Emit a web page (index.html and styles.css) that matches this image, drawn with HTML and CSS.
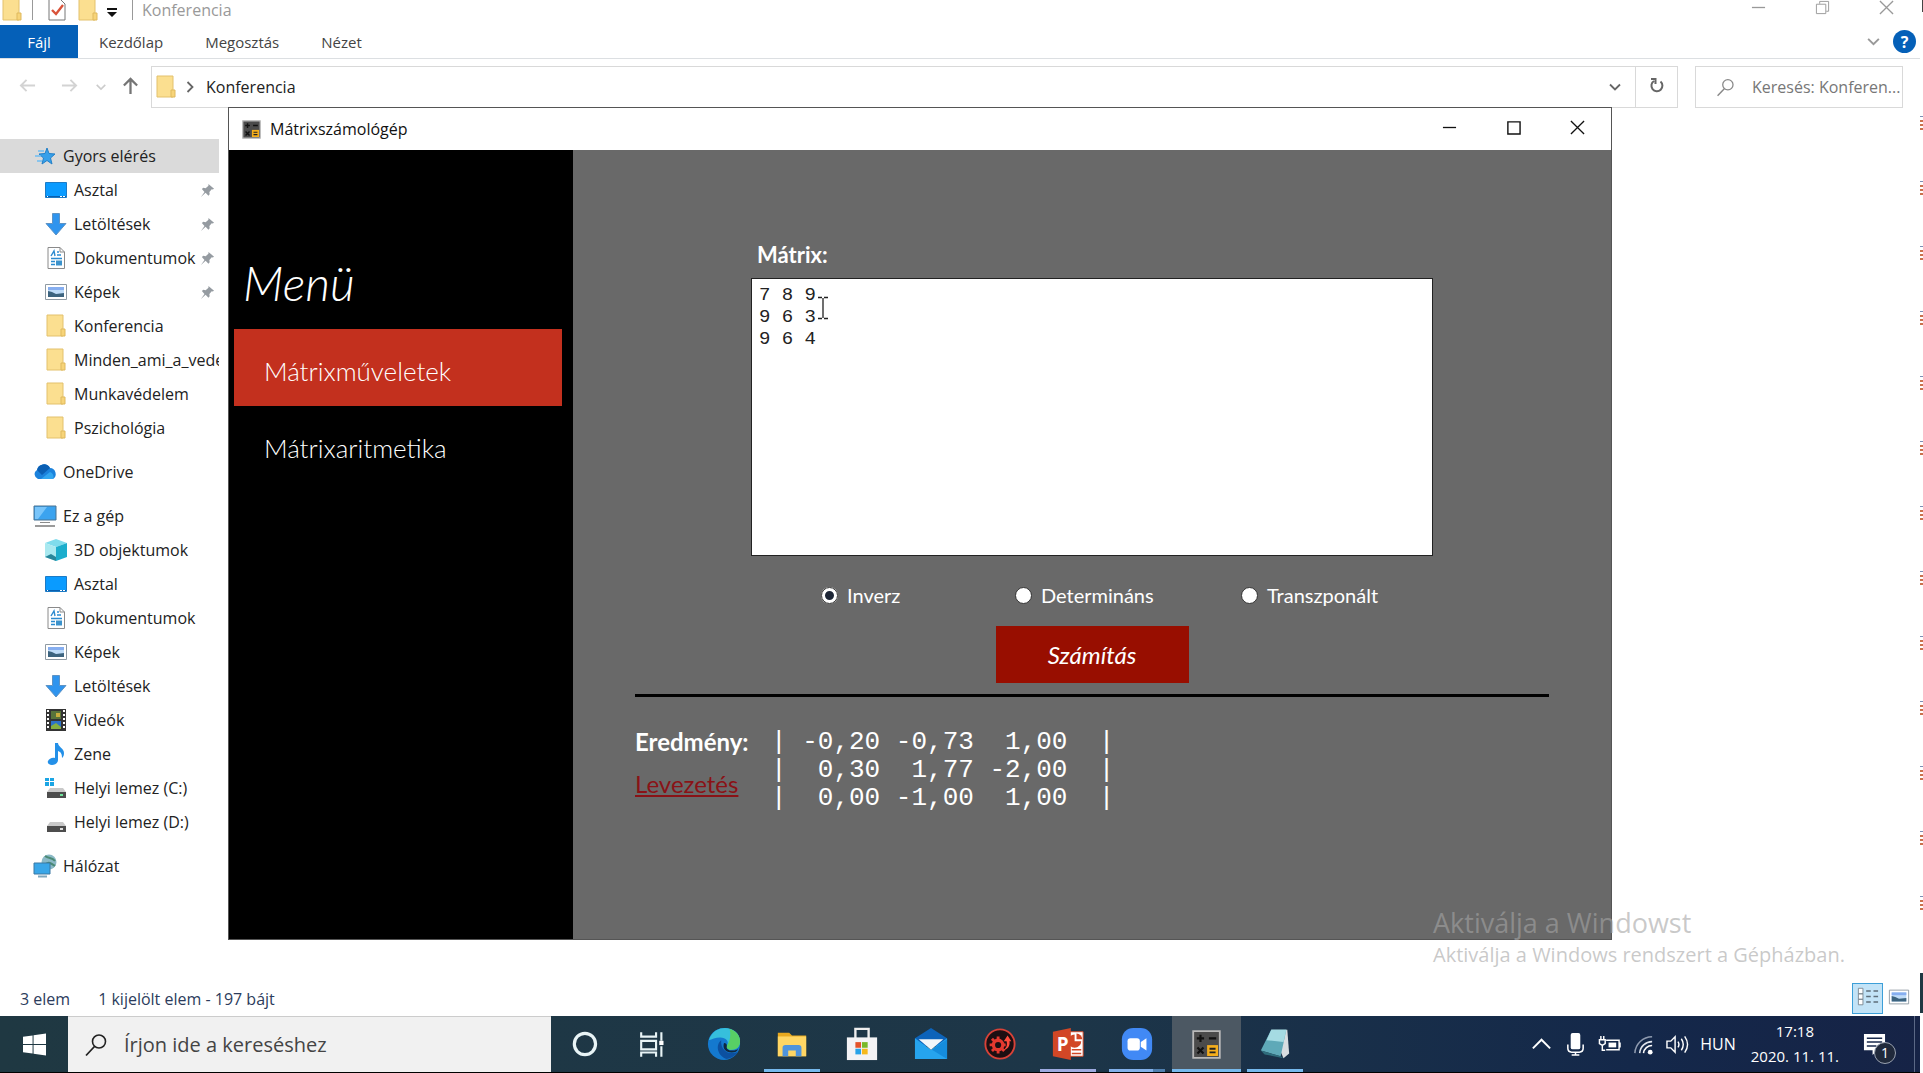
FILE: index.html
```html
<!DOCTYPE html>
<html lang="hu">
<head>
  <meta charset="UTF-8">
  <meta name="viewport" content="width=device-width, initial-scale=1.0">
  <title>Mátrixszámológép</title>
  <link rel="stylesheet" href="styles.css">
</head>
<body>
  <!-- Közös ikonok -->
  <svg class="symbols" aria-hidden="true">
    <symbol id="i-folder" viewBox="0 0 24 24">
      <path d="M3 1h16v21H3z" fill="#fbdf90" stroke="#e3c16c"/>
      <path d="M17 15h4v7h-4z" fill="#f7d479" stroke="#dfb95f"/>
    </symbol>
    <symbol id="i-desktop" viewBox="0 0 24 24">
      <path d="M1.500 4.500h21v15h-21z" fill="#0a9bff" stroke="#1c7bc6"/>
      <path d="M2 18.500h20" stroke="#0a5fae"/>
      <path d="M16 18.500h2M19 18.500h2M3 18.500h1" stroke="#fff"/>
    </symbol>
    <symbol id="i-down" viewBox="0 0 24 24">
      <path d="M8.500 1.500h7v10h6.500L12 23 2 11.500h6.500z" fill="#2f94ee" stroke="#5e93c4"/>
    </symbol>
    <symbol id="i-doc" viewBox="0 0 24 24">
      <path d="M4 1.500h12l4.500 4.500v16.500H4z" fill="#fff" stroke="#8a8a8a"/>
      <path d="M16 1.500V6h4.500" fill="none" stroke="#8a8a8a"/>
      <path d="M7 10l3-5 1 5M13 6h2M13 9h4M7 12.500h11M7 15.500h4M7 18.500h4" fill="none" stroke="#2b8bd0" stroke-width="1.400"/>
      <path d="M12 14.500h6v5h-6z" fill="#3c93cc"/>
    </symbol>
    <symbol id="i-picture" viewBox="0 0 24 24">
      <path d="M1.500 4.500h21v15h-21z" fill="#fff" stroke="#8f9aa3"/>
      <path d="M4 7h16v10H4z" fill="#bfdcf8"/>
      <path d="M4 7h16v3H4z" fill="#86aef0"/>
      <path d="M4 11l4 1 4 2 8-1v4H4z" fill="#3d647f"/>
    </symbol>
    <symbol id="i-pin" viewBox="0 0 16 16">
      <path d="M9 1l6 5-1.500 1-1-.3-2.500 3 .3 2.300-1.300 1.500L6 10.500 1 15l3.800-5.500L2 6.500 3.500 5l2.500.5 3-2.500z" fill="#959ba1"/>
    </symbol>
    <symbol id="i-calc" viewBox="0 0 24 24">
      <path d="M1 1h22v22H1z" fill="#4b4b4b" stroke="#b9b9b9" stroke-width="1.500"/>
      <path d="M4 7h6M7 4v6M14 7h6M4.500 14.500l5 5M9.500 14.500l-5 5" stroke="#111" stroke-width="1.800"/>
      <path d="M12.500 12.500h9v9h-9z" fill="#f5ae1c"/>
      <path d="M14.500 15.500h5M14.500 18.500h5" stroke="#222" stroke-width="1.500"/>
    </symbol>
    <symbol id="i-lens" viewBox="0 0 24 24">
      <circle cx="15" cy="8.500" r="6.500" fill="none" stroke="currentColor" stroke-width="1.600"/>
      <path d="M10.500 13.500L2 22.500" stroke="currentColor" stroke-width="1.800"/>
    </symbol>
    <symbol id="i-chevron" viewBox="0 0 14 14">
      <path d="M2 4.500l5 5 5-5" fill="none" stroke="currentColor" stroke-width="1.800"/>
    </symbol>
    <symbol id="i-close" viewBox="0 0 16 16">
      <path d="M1 1l14 14M15 1L1 15" stroke="currentColor" stroke-width="1.400"/>
    </symbol>
    <symbol id="i-min" viewBox="0 0 16 16">
      <path d="M1 8h14" stroke="currentColor" stroke-width="1.400"/>
    </symbol>
  </svg>

  <div class="screen">
    <div class="desktop">
      <!-- Fájlkezelő -->
      <div class="explorer">
        <header class="titlebar">
          <svg class="ico"><use href="#i-folder"/></svg>
          <span class="sep"></span>
          <svg class="ico check" viewBox="0 0 24 24"><path d="M4 1h11l5 5v16H4z" fill="#fff" stroke="#777"/><path d="M7 12l4 4 7-9" fill="none" stroke="#d9533a" stroke-width="2.400"/></svg>
          <svg class="ico"><use href="#i-folder"/></svg>
          <svg class="ico more" viewBox="0 0 24 24"><path d="M7 10h10v2H7zM7 14h10l-5 5z" fill="#111"/></svg>
          <span class="sep"></span>
          <span class="title">Konferencia</span>
          <div class="win-buttons">
            <button aria-label="Kis méret"><svg><use href="#i-min"/></svg></button>
            <button aria-label="Előző méret"><svg viewBox="0 0 16 16"><path d="M1.500 4.500h10v10h-10zM5 4V1.500h9.500V12H12" fill="none" stroke="currentColor"/></svg></button>
            <button aria-label="Bezárás"><svg><use href="#i-close"/></svg></button>
          </div>
        </header>
        <nav class="tabs">
          <a href="#" class="file">Fájl</a>
          <a href="#">Kezdőlap</a>
          <a href="#">Megosztás</a>
          <a href="#">Nézet</a>
          <svg class="expand"><use href="#i-chevron"/></svg>
          <button class="help" aria-label="Súgó">?</button>
        </nav>
        <div class="address-row">
          <button class="nav" aria-label="Vissza"><svg viewBox="0 0 18 18"><path d="M17 9H2M8 3L2 9l6 6" fill="none" stroke="#d3d3d3" stroke-width="2"/></svg></button>
          <button class="nav" aria-label="Előre"><svg viewBox="0 0 18 18"><path d="M1 9h15M10 3l6 6-6 6" fill="none" stroke="#d3d3d3" stroke-width="2"/></svg></button>
          <svg class="recent"><use href="#i-chevron"/></svg>
          <button class="nav up" aria-label="Fel"><svg viewBox="0 0 18 18"><path d="M9 18V2M2 9l7-7 7 7" fill="none" stroke="#757575" stroke-width="2.400"/></svg></button>
          <div class="address">
            <svg class="ico"><use href="#i-folder"/></svg>
            <svg class="crumb"><use href="#i-chevron"/></svg>
            <span>Konferencia</span>
            <svg class="drop"><use href="#i-chevron"/></svg>
            <button class="refresh" aria-label="Frissítés"><svg viewBox="0 0 16 16"><path d="M11.500 4.500A5.500 5.500 0 1 1 5 4M2 2h4.500v5" fill="none" stroke="#666" stroke-width="2"/></svg></button>
          </div>
          <label class="search">
            <svg><use href="#i-lens"/></svg>
            <input type="text" aria-label="Keresés" placeholder="Keresés: Konferen...">
          </label>
        </div>

        <nav class="tree">
          <ul>
            <li class="root selected"><svg viewBox="0 0 24 24"><path d="M14 4l2 5.500 6 .5-4.500 4 1.500 6-5-3.500-5 3.500 1.500-6L6 10l6-.5z" fill="#36a0ea" stroke="#2380c8"/><path d="M5 7h6M2 12h6M4 17h5" stroke="#6fbdf2" stroke-width="1.500"/></svg>Gyors elérés</li>
            <li><svg><use href="#i-desktop"/></svg>Asztal<svg class="pin"><use href="#i-pin"/></svg></li>
            <li><svg><use href="#i-down"/></svg>Letöltések<svg class="pin"><use href="#i-pin"/></svg></li>
            <li><svg><use href="#i-doc"/></svg>Dokumentumok<svg class="pin"><use href="#i-pin"/></svg></li>
            <li><svg><use href="#i-picture"/></svg>Képek<svg class="pin"><use href="#i-pin"/></svg></li>
            <li><svg><use href="#i-folder"/></svg>Konferencia</li>
            <li><svg><use href="#i-folder"/></svg>Minden_ami_a_vede</li>
            <li><svg><use href="#i-folder"/></svg>Munkavédelem</li>
            <li><svg><use href="#i-folder"/></svg>Pszichológia</li>
          </ul>
          <ul>
            <li class="root"><svg viewBox="0 0 24 24"><path d="M5 19a5 5 0 0 1-1-9 7 7 0 0 1 13-2 6 6 0 0 1 3 11z" fill="#1b82dc"/><path d="M4 10a7 7 0 0 1 13-2l-8 7z" fill="#0a5fb4"/><path d="M8 19l9-7a5 5 0 0 1 3 7z" fill="#31a6f0"/></svg>OneDrive</li>
          </ul>
          <ul>
            <li class="root"><svg viewBox="0 0 24 24"><path d="M1 2h22v14H1z" fill="#3ba3ef" stroke="#4b7391"/><path d="M2 3h12L5 15H2z" fill="#79c5fa"/><path d="M7 18.500h10" stroke="#8b8b8b"/><path d="M2 22h20" stroke="#9b9b9b" stroke-width="2"/></svg>Ez a gép</li>
            <li><svg viewBox="0 0 24 24"><path d="M1 5l11-4 11 4-11 4z" fill="#7fdcec"/><path d="M1 5l11 4v14L1 19z" fill="#a9e9f0"/><path d="M12 9l11-4v14l-11 4z" fill="#1badcc"/><path d="M1 19l6-3 5 3v4z" fill="#27869a"/></svg>3D objektumok</li>
            <li><svg><use href="#i-desktop"/></svg>Asztal</li>
            <li><svg><use href="#i-doc"/></svg>Dokumentumok</li>
            <li><svg><use href="#i-picture"/></svg>Képek</li>
            <li><svg><use href="#i-down"/></svg>Letöltések</li>
            <li><svg viewBox="0 0 24 24"><path d="M2 1h20v22H2z" fill="#343434"/><path d="M4 2v20M20 2v20" stroke="#fff" stroke-width="2" stroke-dasharray="2 2"/><path d="M7 3h10v8H7z" fill="#58733b"/><path d="M12 5h4v4h-4z" fill="#c9ac3d"/><path d="M7 13h10v8H7z" fill="#2d72c8"/><path d="M7 18l5-3 5 4v2H7z" fill="#86b040"/></svg>Videók</li>
            <li><svg viewBox="0 0 24 24"><path d="M11 1h3c0 4 6 5 6 10 0 3-1 4-2 5 0-4-1-6-4-7v9c0 3-3 5-6 5s-5-2-4-4 4-4 7-3z" fill="#2390e8"/></svg>Zene</li>
            <li><svg viewBox="0 0 24 24"><path d="M1 2h4v3H1zM6 2h4v3H6zM1 6h4v4H1zM6 6h4v4H6z" fill="#1ba5e4"/><path d="M6 12h13l3 4H3z" fill="#c9c9c9"/><path d="M3 16h19v6H3z" fill="#4d4d4d"/><path d="M16 19h3" stroke="#6de29a" stroke-width="2"/></svg>Helyi lemez (C:)</li>
            <li><svg viewBox="0 0 24 24"><path d="M6 12h13l3 4H3z" fill="#c9c9c9"/><path d="M3 16h19v6H3z" fill="#4d4d4d"/><path d="M16 19h3" stroke="#ddd" stroke-width="2"/></svg>Helyi lemez (D:)</li>
          </ul>
          <ul>
            <li class="root"><svg viewBox="0 0 24 24"><circle cx="16" cy="8" r="7.500" fill="#8bb9c6"/><path d="M12 2c4 3 7 1 10 5M13 10c3-3 6 0 9 2" stroke="#4b8a75" stroke-width="2" fill="none"/><path d="M1 9h16v11H1z" fill="#39a6e8" stroke="#3a78a3"/><path d="M5 22.500h9" stroke="#7fa7bd" stroke-width="2"/></svg>Hálózat</li>
          </ul>
        </nav>

        <footer class="status">
          <span>3 elem</span>
          <span>1 kijelölt elem - 197 bájt</span>
          <button class="view active" aria-label="Részletek"><svg viewBox="0 0 24 24"><path d="M1.500 2.500h5v6h-5zM1.500 8.500h5v6h-5zM1.500 14.500h5v6h-5z" fill="#fff" stroke="#7b8790"/><path d="M10 5.500h5M18 5.500h5M10 11.500h5M18 11.500h5M10 17.500h5M18 17.500h5" stroke="#5f6f7b" stroke-width="1.500"/></svg></button>
          <button class="view" aria-label="Nagy ikonok"><svg><use href="#i-picture"/></svg></button>
        </footer>
      </div>

      <!-- Mátrixszámológép ablak -->
      <section class="calc">
        <header class="calc-title">
          <svg class="app-icon"><use href="#i-calc"/></svg>
          <h1>Mátrixszámológép</h1>
          <div class="win-buttons">
            <button aria-label="Kis méret"><svg><use href="#i-min"/></svg></button>
            <button aria-label="Teljes méret"><svg viewBox="0 0 16 16"><path d="M2 2h13v13H2z" fill="none" stroke="currentColor" stroke-width="1.500"/></svg></button>
            <button aria-label="Bezárás"><svg><use href="#i-close"/></svg></button>
          </div>
        </header>
        <div class="calc-body">
          <nav class="menu">
            <h2>Menü</h2>
            <a href="#" class="active">Mátrixműveletek</a>
            <a href="#">Mátrixaritmetika</a>
          </nav>
          <main>
            <form class="input-form">
              <label class="caption" for="matrix">Mátrix:</label>
              <textarea id="matrix" spellcheck="false">7 8 9
9 6 3
9 6 4</textarea>
              <svg class="cursor" viewBox="0 0 12 24"><path d="M1 1.500h4M7 1.500h4M6 2v20M1 22.500h4M7 22.500h4" stroke="#222" stroke-width="1.300"/></svg>
              <div class="options">
                <label><input type="radio" name="op" checked>Inverz</label>
                <label><input type="radio" name="op">Determináns</label>
                <label><input type="radio" name="op">Transzponált</label>
              </div>
              <button type="button" class="run">Számítás</button>
            </form>
            <hr>
            <div class="result">
              <div class="result-side">
                <h3>Eredmény:</h3>
                <a href="#">Levezetés</a>
              </div>
              <pre>| -0,20 -0,73  1,00  |
|  0,30  1,77 -2,00  |
|  0,00 -1,00  1,00  |</pre>
            </div>
          </main>
        </div>
      </section>

      <div class="watermark">
        <p class="big">Aktiválja a Windowst</p>
        <p>Aktiválja a Windows rendszert a Gépházban.</p>
      </div>
    </div>

    <!-- Tálca -->
    <footer class="taskbar">
      <button class="start" aria-label="Start"><svg viewBox="0 0 24 24"><path d="M0 4l10-1.500V11.500H0zM11 2.300L24 .5v11H11zM0 12.500h10v9L0 20zM11 12.500h13v11L11 21.700z" fill="#fff"/></svg></button>
      <label class="task-search">
        <svg><use href="#i-lens"/></svg>
        <input type="text" aria-label="Keresés a gépen" placeholder="Írjon ide a kereséshez">
      </label>
      <button aria-label="Cortana"><svg viewBox="0 0 32 32"><circle cx="15" cy="16" r="10" fill="none" stroke="#e8f4f6" stroke-width="3"/></svg></button>
      <button aria-label="Feladatnézet"><svg viewBox="0 0 32 32"><path d="M3 5v4h14V5M3 13h14v8H3zM3 28v-4h14v4M22 5v8M22 18v10" fill="none" stroke="#e8f4f6" stroke-width="2"/><path d="M20 13h4v4h-4z" fill="#fff"/></svg></button>
      <button aria-label="Edge"><svg viewBox="0 0 36 36"><circle cx="18" cy="18" r="17" fill="#1479cf"/><path d="M2 14C5 4 13 1 19 1c9 0 16 6 16 14 0 6-4 9-9 9-4 0-6-2-5-4 3-5-1-9-7-9-5 0-9 2-12 3z" fill="#36bfdc"/><path d="M24 2c7 2 11 7 11 13 0 6-4 9-9 9-4 0-6-2-5-4 2-3 5-9 3-18z" fill="#58cf65"/><path d="M15 14c-7 6-3 17 6 20 5-1 10-4 12-8-7 4-19 1-18-12z" fill="#0c50a0"/><path d="M21 20c-1 3 2 5 6 5 3 0 5-1 6-2-1 3-3 4-7 4-6 0-10-4-8-10 2 0 3 1 3 3z" fill="#10273e"/></svg></button>
      <button class="open" aria-label="Fájlkezelő"><svg viewBox="0 0 36 36"><path d="M3 6h12l3 3h15v22H3z" fill="#e8a91f"/><path d="M3 10h30v21H3z" fill="#ffd664"/><path d="M8 31v-9q0-3 3-3h14q3 0 3 3v9h-6v-6h-8v6z" fill="#4f94dd"/></svg></button>
      <button aria-label="Store"><svg viewBox="0 0 36 36"><path d="M11 12V2h14v10" fill="none" stroke="#eee" stroke-width="2.500"/><path d="M2 11h32v24H2z" fill="#f3f3f5"/><path d="M11 16h6v6h-6z" fill="#e4532a"/><path d="M18 16h6v6h-6z" fill="#78b928"/><path d="M11 23h6v6h-6z" fill="#28a3e8"/><path d="M18 23h6v6h-6z" fill="#f5b91d"/></svg></button>
      <button aria-label="Posta"><svg viewBox="0 0 36 36"><path d="M1 12L18 1l17 11v8H1z" fill="#0c63ba"/><path d="M1 12l17 12 17-12v22H1z" fill="#26a4ee"/><path d="M5 13h26L18 24z" fill="#f2f6fa"/><path d="M19 24l16-11v21z" fill="#158cdc"/></svg></button>
      <button aria-label="Game Center"><svg viewBox="0 0 36 36"><circle cx="18" cy="18" r="15.500" fill="#1d0f12" stroke="#d84238" stroke-width="2"/><circle cx="16" cy="19" r="5" fill="none" stroke="#e5392f" stroke-width="3.500"/><path d="M16 10v4M16 24v4M7 19h4M21 19h3M9.500 12.500l3 3M9.500 25.500l3-3M22.500 25.500l-3-3" stroke="#e5392f" stroke-width="3"/><path d="M20 25c5-2 6-6 5-10h-3l4-6 4 6h-2c1 5-2 9-8 10z" fill="#ff4d3d"/></svg></button>
      <button class="open ppt" aria-label="PowerPoint"><svg viewBox="0 0 36 36"><path d="M17 5h17v26H17z" fill="#fff" stroke="#d24726"/><path d="M25 8v7h7a7 7 0 1 1-7-7z" fill="#d24726"/><path d="M27 7a6 6 0 0 1 6 6h-6z" fill="#d24726"/><path d="M22 24h10M22 28h10" stroke="#d24726" stroke-width="1.500"/><path d="M2 5L21 1v34L2 31z" fill="#d24726"/><text x="6" y="25" class="p">P</text></svg></button>
      <button class="open multi" aria-label="Zoom"><svg viewBox="0 0 36 36"><rect x="2" y="1" width="32" height="34" rx="12" fill="#4189f5"/><rect x="8" y="12" width="13" height="13" rx="3" fill="#fff"/><path d="M22 16l6-4v13l-6-4z" fill="#fff"/></svg></button>
      <button class="open current" aria-label="Mátrixszámológép"><svg class="small"><use href="#i-calc"/></svg></button>
      <button class="open" aria-label="Jegyzettömb"><svg viewBox="0 0 36 36"><path d="M14 3h17l2 25-6 5z" fill="#d8dde0"/><path d="M14 3h16l-6 28L3 25z" fill="#5fa9b8"/><path d="M14 3h16l-3 13-18-2z" fill="#a5dbe3"/><path d="M3 25l21 6 3 2-20-4z" fill="#2f6d7c"/></svg></button>

      <div class="tray">
        <svg viewBox="0 0 24 24"><path d="M3 16l9-9 9 9" fill="none" stroke="#fff" stroke-width="2"/></svg>
        <svg viewBox="0 0 24 24"><rect x="7" y="0" width="10" height="17" rx="2" fill="#fff"/><path d="M4 12v4q0 4 4 4h8q4 0 4-4v-4M12 20v3M8 23h8" fill="none" stroke="#fff" stroke-width="1.600"/></svg>
        <svg viewBox="0 0 24 24"><path d="M8.500 7.500H22v10H8.500M23 10v5M1.500 7h6v4l-3 2-3-2zM3 3v4M6 3v4M4.500 13v5h3" fill="none" stroke="#fff" stroke-width="1.500"/><path d="M11 10h8v5h-8z" fill="#fff"/></svg>
        <svg viewBox="0 0 24 24"><g fill="none" stroke="#8f9bb0" stroke-width="1.600"><path d="M3 21A18 18 0 0 1 21 4"/><path d="M8 21A13 13 0 0 1 21 9" stroke="#dfe4ec"/><path d="M12 21a9 9 0 0 1 9-8" stroke="#fff"/></g><circle cx="19" cy="20" r="2.500" fill="#fff"/></svg>
        <svg viewBox="0 0 24 24"><path d="M1 8.500h4L9.500 4v16L5 15.500H1zM12.500 9q2 3 0 6M16 6q4 6 0 12M19.500 3.500q6 8.500 0 17" fill="none" stroke="#fff" stroke-width="1.500"/></svg>
        <span class="lang">HUN</span>
        <time>17:18<br>2020. 11. 11.</time>
        <button class="notes" aria-label="Értesítések"><svg viewBox="0 0 24 24"><path d="M1 1h22v17h-8l-5 5v-5H1z" fill="#fff"/><path d="M4 5.500h16M4 9.500h16M4 13.500h10" stroke="#1a2a4c" stroke-width="1.600"/></svg><span class="badge">1</span></button>
      </div>
    </footer>
  </div>
  <aside class="edge"></aside>
</body>
</html>
```
FILE: styles.css
```css
* {
  box-sizing: border-box;
}
body {
  margin: 0;
  display: flex;
  min-height: 100vh;
  background-color: #fff;
  font-family: 'Open Sans', 'Noto Sans', sans-serif;
  font-size: 16px;
  color: #222;
}
button {
  font-family: inherit;
  padding: 0;
  border: none;
  background: none;
  cursor: pointer;
}
a {
  text-decoration: none;
  color: inherit;
}
ul, p, h1, h2, h3, pre {
  margin: 0;
  padding: 0;
}
.symbols {
  position: absolute;
  width: 0;
  height: 0;
}
.screen {
  flex: 1;
  display: flex;
  flex-direction: column;
  min-width: 0;
}
.desktop {
  position: relative;
  flex: 1;
  display: flex;
}

/* Fájlkezelő */
.explorer {
  flex: 1;
  display: flex;
  flex-direction: column;
}
.ico {
  width: 24px;
  height: 24px;
  flex: none;
}
.titlebar {
  display: flex;
  align-items: center;
  height: 25px;
  padding-bottom: 6px;
  color: #999;
  overflow: hidden;
}
.titlebar .sep {
  width: 1px;
  height: 20px;
  margin: 0 9px 0 8px;
  background-color: #999;
}
.titlebar .check {
  margin: 0 7px 0 3px;
}
.titlebar .title {
  color: #999;
}
.win-buttons {
  display: flex;
  margin-left: auto;
  margin-right: 2px;
}
.win-buttons button {
  width: 64px;
  height: 24px;
  color: inherit;
}
.win-buttons svg {
  width: 15px;
  height: 15px;
}
.tabs {
  display: flex;
  align-items: center;
  height: 34px;
  border-bottom: 1px solid #dcdfe2;
  color: #444;
  font-size: 15px;
}
.tabs a {
  height: 33px;
  line-height: 34px;
  padding: 0 21px;
}
.tabs a.file {
  width: 78px;
  padding: 0;
  text-align: center;
  background-color: #0560b8;
  color: #fff;
}
.tabs .expand {
  width: 15px;
  height: 15px;
  margin: 0 12px 0 auto;
  color: #999;
}
.tabs .help {
  width: 23px;
  height: 23px;
  margin-right: 4px;
  border-radius: 50%;
  background-color: #0560b8;
  color: #fff;
  font-size: 16px;
  font-weight: 700;
}
.address-row {
  display: flex;
  align-items: center;
  height: 56px;
  padding: 0 17px 0 6px;
}
.nav {
  width: 42px;
  height: 26px;
}
.nav svg {
  width: 17px;
  height: 17px;
}
.recent {
  width: 12px;
  height: 12px;
  margin: 0 2px 0 5px;
  color: #ccc;
}
.address {
  flex: 1;
  display: flex;
  align-items: center;
  height: 42px;
  margin-right: 17px;
  padding-left: 2px;
  border: 1px solid #d9d9d9;
}
.crumb, .drop {
  width: 14px;
  height: 14px;
  color: #666;
}
.crumb {
  margin: 0 9px 0 5px;
  transform: rotate(-90deg);
}
.drop {
  margin: 0 13px 0 auto;
}
.refresh {
  width: 42px;
  height: 40px;
  border-left: 1px solid #d9d9d9;
}
.refresh svg {
  width: 16px;
  height: 16px;
}
.search {
  display: flex;
  align-items: center;
  width: 208px;
  height: 42px;
  padding-left: 20px;
  border: 1px solid #d9d9d9;
  color: #888;
}
.search svg {
  width: 19px;
  height: 19px;
  flex: none;
}
.search input {
  width: 150px;
  margin-left: 17px;
  padding: 0;
  border: none;
  outline: none;
  font: inherit;
}
.search input::placeholder {
  color: #777;
}
.tree {
  flex: 1;
  width: 219px;
  padding-top: 24px;
}
.tree ul {
  margin-bottom: 10px;
  list-style: none;
}
.tree li {
  display: flex;
  align-items: center;
  height: 34px;
  padding-left: 44px;
  overflow: hidden;
  white-space: nowrap;
}
.tree li.root {
  padding-left: 33px;
}
.tree li.selected {
  background-color: #dadada;
}
.tree svg {
  width: 24px;
  height: 24px;
  margin-right: 6px;
  flex: none;
}
.tree .pin {
  width: 15px;
  height: 15px;
  margin: 0 4px 0 auto;
}
.status {
  display: flex;
  align-items: center;
  height: 33px;
  padding: 0 6px 2px 20px;
  color: #2c3c5c;
}
.status span {
  margin-right: 28px;
}
.view {
  width: 31px;
  height: 31px;
}
.view svg {
  width: 22px;
  height: 22px;
}
.view.active {
  margin-left: auto;
  border: 1px solid #3c9fd8;
  background-color: #c2e3f7;
}

/* Számológép ablak */
.calc {
  position: absolute;
  top: 107px;
  right: 308px;
  bottom: 76px;
  left: 228px;
  display: flex;
  flex-direction: column;
  border: 1px solid #555;
  background-color: #fff;
}
.calc-title {
  display: flex;
  align-items: center;
  height: 42px;
  padding-left: 13px;
  color: #111;
}
.calc-title h1 {
  margin-left: 9px;
  font-size: 16px;
  line-height: 22px;
  font-weight: 400;
}
.app-icon {
  width: 19px;
  height: 19px;
}
.calc-body {
  flex: 1;
  display: flex;
  font-family: Lato, sans-serif;
  color: #fff;
}
.menu {
  width: 344px;
  padding: 107px 11px 0 5px;
  background-color: #000;
}
.menu h2 {
  margin-left: 9px;
  margin-bottom: 20px;
  font-size: 48px;
  line-height: 52px;
  font-weight: 300;
  font-style: italic;
}
.menu a {
  display: block;
  height: 77px;
  line-height: 84px;
  padding-left: 30px;
  font-size: 26px;
  font-weight: 300;
}
.menu a.active {
  background-color: #c3301e;
}
main {
  flex: 1;
  padding: 91px 62px 0;
  background-color: #696969;
}
.input-form {
  position: relative;
  width: 682px;
  margin: 0 auto;
}
.caption {
  display: block;
  margin: 0 0 9px 6px;
  font-size: 22px;
  line-height: 28px;
  font-weight: 700;
}
textarea {
  display: block;
  width: 100%;
  height: 278px;
  padding: 5px 7px;
  border: 1px solid #222;
  background-color: #fff;
  color: #222;
  font-family: 'Liberation Mono', monospace;
  font-size: 19px;
  line-height: 22px;
  resize: none;
  outline: none;
}
.cursor {
  position: absolute;
  top: 55px;
  left: 66px;
  width: 12px;
  height: 24px;
}
.options {
  display: grid;
  grid-template-columns: 194px 226px auto;
  margin: 27px 0 19px 70px;
}
.options label {
  display: flex;
  align-items: center;
  font-size: 20px;
  line-height: 24px;
}
.options input {
  appearance: none;
  width: 17px;
  height: 17px;
  margin: 0 9px 0 0;
  border: 1px solid #333;
  border-radius: 50%;
  background-color: #fff;
}
.options input:checked {
  border: 4px solid #fff;
  background-color: #1d2636;
  outline: 1px solid #333;
  outline-offset: -1px;
}
.run {
  display: block;
  width: 193px;
  height: 57px;
  margin: 0 auto;
  background-color: #980e00;
  color: #fff;
  font-size: 24px;
  font-style: italic;
}
hr {
  height: 3px;
  margin: 11px 0 31px;
  border: none;
  background-color: #000;
}
.result {
  display: flex;
}
.result-side {
  width: 136px;
}
.result-side h3 {
  margin-bottom: 14px;
  font-size: 24px;
  line-height: 28px;
}
.result-side a {
  font-size: 24px;
  line-height: 28px;
  color: #8a1216;
  text-decoration: underline;
}
.result pre {
  font-family: 'Liberation Mono', monospace;
  font-size: 26px;
  line-height: 28px;
}
.watermark {
  position: absolute;
  right: 77px;
  bottom: 46px;
  width: 410px;
  color: rgba(165, 165, 165, 0.6);
  font-size: 20px;
  line-height: 30px;
  white-space: nowrap;
  pointer-events: none;
}
.watermark .big {
  font-size: 27px;
  line-height: 34px;
}

/* Tálca */
.taskbar {
  display: flex;
  height: 57px;
  border-bottom: 1px solid #000;
  background: linear-gradient(to right, #1f3842, #1d3648 55%, #14284a 85%, #162346);
  color: #fff;
}
.taskbar > button {
  display: flex;
  align-items: center;
  justify-content: center;
  width: 69px;
  border: solid transparent;
  border-width: 3px 6px 3px 7px;
}
.taskbar > button svg {
  width: 34px;
  height: 34px;
  flex: none;
}
.taskbar > button.start {
  width: 68px;
}
.taskbar > .start svg {
  width: 23px;
  height: 23px;
}
.taskbar svg.small {
  width: 29px;
  height: 29px;
}
.taskbar > button.open {
  background: linear-gradient(#76b9ed, #76b9ed) bottom / 100% 3px no-repeat border-box;
  border-width: 3px 0 3px;
  width: 56px;
  margin: 0 7px 0 6px;
}
.taskbar > button.ppt {
  background-image: linear-gradient(#9daae0, #9daae0);
}
.taskbar > button.multi {
  background-image: linear-gradient(to right, #82b0ea 44px, #4f7fae 44px);
}
.taskbar > button.current {
  width: 69px;
  margin: 0;
  background-color: #4c5863;
}
.p {
  font-size: 20px;
  font-weight: 700;
  fill: #fff;
}
.task-search {
  display: flex;
  align-items: center;
  width: 483px;
  padding-left: 16px;
  border-top: 1px solid #ccc;
  background-color: #f1f1f1;
  color: #222;
}
.task-search svg {
  width: 24px;
  height: 24px;
}
.task-search input {
  flex: 1;
  margin-left: 16px;
  padding: 0;
  border: none;
  outline: none;
  background: none;
  font: inherit;
  font-size: 20px;
}
.task-search input::placeholder {
  color: #444;
}
.tray {
  display: flex;
  align-items: center;
  margin-left: auto;
  padding-right: 5px;
}
.tray svg {
  width: 23px;
  height: 23px;
  margin-right: 11px;
}
.tray .lang {
  margin-right: 15px;
}
.tray time {
  font-size: 15px;
  line-height: 25px;
  text-align: center;
}
.notes {
  position: relative;
  height: 56px;
  margin-left: 24px;
  padding-right: 28px;
  border-right: 1px solid #5b6885;
}
.tray .notes svg {
  display: block;
  margin: 0;
}
.badge {
  position: absolute;
  top: 26px;
  right: 18px;
  width: 22px;
  height: 22px;
  border: 1px solid #9aa2b0;
  border-radius: 50%;
  background-color: #20293b;
  color: #fff;
  font-size: 14px;
  line-height: 20px;
}

/* A jobb szélen kilógó ablak csíkja */
.edge {
  width: 3px;
  background:
    linear-gradient(#444, #444) right 0 top 0 / 1px 12px no-repeat,
    linear-gradient(#1f3842, #1f3842) 0 973px / 3px 40px no-repeat,
    linear-gradient(#fff, #fff) 0 913px / 3px 200px no-repeat,
    linear-gradient(#fff, #fff) 0 0 / 3px 98px no-repeat,
    repeating-linear-gradient(#7d8fb5 0 1px, #fff 1px 4px, #c9714d 4px 6px, #fff 6px 8px, #c9714d 8px 10px, #fff 10px 12px, #c9714d 12px 14px, #fff 14px 65px) 0 116px;
}
```
